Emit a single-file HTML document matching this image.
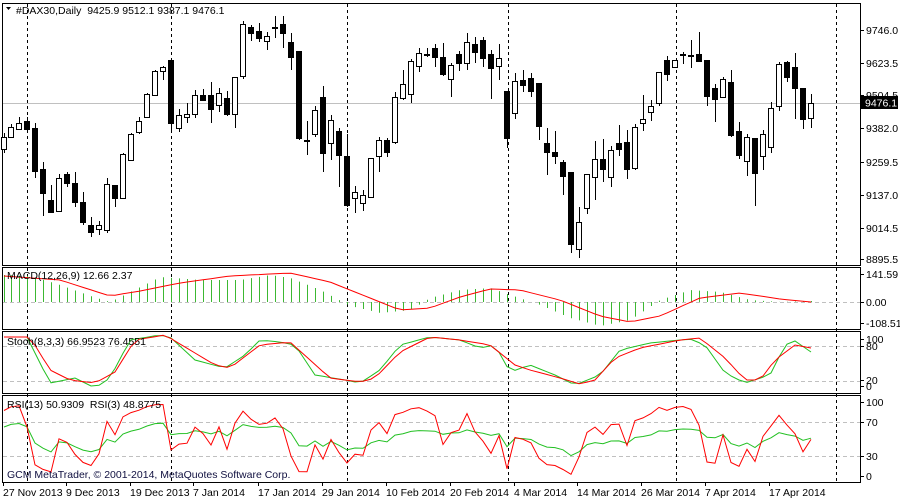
<!DOCTYPE html>
<html><head><meta charset="utf-8">
<style>
html,body{margin:0;padding:0;background:#fff;width:900px;height:500px;overflow:hidden}
svg{display:block}
text{font-family:"Liberation Sans",sans-serif;font-size:10.5px;fill:#000}
</style></head>
<body>
<svg id="s" width="900" height="500" xmlns="http://www.w3.org/2000/svg"></svg>
<script>
const S=document.getElementById('s');let h='';
// candles: x, high, low, open, close (pixel y)
const C=[
[4,133,153,149,137],[11,124,137,137,127],[19,117,129,129,123],[27,117,131,121,129],[35,123,178,128,171],
[43,162,216,169,193],[51,185,213,200,212],[59,174,211,211,178],[67,172,187,174,183],[75,172,207,183,202],
[83,192,225,202,222],[91,217,237,225,232],[99,221,235,229,225],[107,178,233,230,184],[115,185,207,185,198],
[123,153,198,198,154],[131,133,161,160,134],[139,117,134,132,121],[147,93,117,117,94],[155,70,95,95,71],
[163,66,80,71,67],[171,60,131,60,123],[179,109,132,128,115],[187,103,123,117,114],[195,90,118,114,95],
[203,89,100,95,100],[211,82,123,95,109],[219,88,112,105,93],[227,91,116,98,114],[235,77,128,114,77],
[243,21,79,76,24],[251,25,41,27,33],[259,23,42,31,38],[267,32,50,41,36],[275,16,38,27,28],
[283,16,48,24,33],[291,33,70,42,57],[299,51,140,51,138],[307,121,155,140,141],[315,106,137,134,110],
[323,86,172,97,153],[331,115,160,143,120],[339,128,187,131,155],[347,134,207,156,205],[355,186,213,198,192],
[363,190,211,203,195],[371,158,197,197,158],[379,137,172,156,140],[387,138,157,140,152],[395,92,144,142,97],
[403,70,100,98,84],[411,59,103,94,61],[419,48,72,66,53],[427,48,57,54,55],[435,44,67,48,57],
[443,43,76,57,74],[451,63,97,79,65],[459,51,71,54,63],[467,33,70,63,42],[475,37,63,44,52],
[483,37,67,40,58],[491,50,99,54,68],[499,44,80,66,58],[507,91,148,91,138],[515,73,119,113,81],
[523,70,92,80,85],[531,73,97,78,91],[539,83,140,83,126],[547,128,175,143,152],[555,131,164,152,156],
[563,160,195,162,176],[571,172,253,172,244],[579,207,258,249,222],[587,174,214,208,174],[595,141,200,177,159],
[603,139,182,159,169],[611,146,187,177,150],[619,125,156,143,149],[627,130,179,142,169],[635,124,170,168,127],
[643,95,131,123,119],[651,100,121,112,106],[659,72,106,103,72],[667,56,81,60,74],[675,60,67,67,60],
[683,52,64,54,55],[691,40,68,55,56],[699,32,62,54,61],[707,60,106,60,96],[715,84,122,88,99],
[723,77,98,97,79],[731,70,137,82,135],[739,122,159,131,155],[747,134,176,161,137],[755,138,206,138,173],
[763,130,170,156,134],[771,102,153,147,108],[779,62,111,106,64],[787,61,82,62,77],[795,53,119,67,88],
[803,88,129,88,119],[811,94,128,118,103]];
// panel frames
const P=[[3,265],[267,329],[331,393],[395,482]];
P.forEach(p=>h+=`<rect x="2.5" y="${p[0]+.5}" width="858" height="${p[1]-p[0]}" fill="none" stroke="#000"/>`);
// grid/current price
h+=`<line x1="3" x2="860" y1="103.5" y2="103.5" stroke="#c0c0c0"/>`;
function dash(y){h+=`<line x1="3" x2="860" y1="${y+.5}" y2="${y+.5}" stroke="#c0c0c0" stroke-dasharray="4,3"/>`;}
dash(302);dash(346);dash(381);dash(422);dash(456);
[27,171,347,508,676,836].forEach(x=>h+=`<line x1="${x+.5}" x2="${x+.5}" y1="4" y2="482" stroke="#000" stroke-dasharray="3,3"/>`);
// MACD
function interp(pts,x){for(let i=0;i<pts.length-1;i++){if(x>=pts[i][0]&&x<=pts[i+1][0]){const t=(x-pts[i][0])/(pts[i+1][0]-pts[i][0]);return pts[i][1]+t*(pts[i+1][1]-pts[i][1]);}}return pts[pts.length-1][1];}
const mb=[[4,275],[30,276],[60,285],[90,296],[110,302],[130,292],[160,277],[200,280],[240,280],[270,275],[290,278],[320,290],[350,306],[380,313],[410,310],[430,298],[460,290],[490,288],[510,295],[540,305],[570,318],[600,326],[630,320],[660,300],[690,290],[720,292],[750,300],[780,302],[811,301]];
C.forEach(c=>{const y=interp(mb,c[0]);h+=`<line x1="${c[0]+.5}" x2="${c[0]+.5}" y1="302" y2="${y}" stroke="#3cb832"/>`;});
function poly(pts,col){h+=`<polyline fill="none" stroke="${col}" points="${pts.map(p=>p.join(',')).join(' ')}"/>`;}
const ms=[[4,276],[60,280],[110,296],[140,291],[180,283],[230,276],[290,273],[330,282],[370,298],[400,310],[430,308],[460,297],[490,289],[520,290],[560,300],[600,316],[630,322],[660,316],[700,298],[740,293],[780,299],[811,302]];
poly(C.map(c=>[c[0],interp(ms,c[0]).toFixed(1)]),'#f00');
// Stoch
const sg=[[3,337],[27,337],[50,383],[75,378],[95,388],[110,378],[130,340],[160,335],[170,337],[195,360],[225,368],[245,355],[260,340],[280,342],[295,345],[315,375],[345,380],[360,383],[380,370],[400,345],[430,337],[460,340],[480,348],[495,345],[510,372],[530,365],[555,375],[575,385],[600,375],[620,350],[650,343],[690,339],[705,345],[725,373],[745,383],[770,375],[785,345],[795,341],[811,352]];
const sr=[[3,337],[30,337],[50,370],[70,380],[95,383],[115,372],[135,340],[165,335],[190,350],[215,365],[230,368],[260,345],[290,342],[310,360],[330,378],[360,382],[375,378],[400,352],[430,337],[460,340],[490,345],[515,365],[530,370],[560,378],[580,384],[595,380],[615,358],[640,348],[680,340],[700,338],[725,358],[745,380],[760,380],[775,360],[795,345],[811,348]];
poly(C.map(c=>[c[0],interp(sg,c[0]).toFixed(1)]),'#22c022');
poly(C.map(c=>[c[0],interp(sr,c[0]).toFixed(1)]),'#f00');
// RSI computed
function rsi(n,g0,l0){let ag=g0,al=l0,out=[];for(let i=0;i<C.length;i++){if(i>0){const d=C[i-1][4]-C[i][4];const g=Math.max(d,0),l=Math.max(-d,0);ag=(ag*(n-1)+g)/n;al=(al*(n-1)+l)/n;}out.push(100-100/(1+ag/Math.max(al,1e-6)));}return out;}
const r13=rsi(13,5,2.6),r3=rsi(3,7,1);
const ry=v=>(477-v*0.76).toFixed(1);
poly(C.map((c,i)=>[c[0],ry(r13[i])]),'#22c022');
poly(C.map((c,i)=>[c[0],ry(r3[i])]),'#f00');
// candles
C.forEach(c=>{const[x,hi,lo,o,cl]=c;const X=x+.5;h+=`<line x1="${X}" x2="${X}" y1="${hi}" y2="${lo}" stroke="#000"/>`;
 const t=Math.min(o,cl),b=Math.max(o,cl);
 if(b-t<1){h+=`<line x1="${x-2}" x2="${x+3}" y1="${t+.5}" y2="${t+.5}" stroke="#000"/>`;}
 else if(cl<o){h+=`<rect x="${x-2.5}" y="${t+.5}" width="5" height="${b-t}" fill="#fff" stroke="#000"/>`;}
 else{h+=`<rect x="${x-2.5}" y="${t+.5}" width="5" height="${b-t}" fill="#000" stroke="#000"/>`;}});
// right axis
const RA=[[30,'9746.0'],[63,'9623.5'],[95,'9504.5'],[128,'9382.0'],[162,'9259.5'],[195,'9137.0'],[228,'9014.5'],[259,'8895.5'],
[274,'141.59'],[302,'0.00'],[323,'-108.51'],[339,'100'],[346,'80'],[380,'20'],[386,'0'],[402,'100'],[422,'70'],[456,'30'],[476,'0']];
RA.forEach(a=>{h+=`<line x1="861" x2="864" y1="${a[0]+.5}" y2="${a[0]+.5}" stroke="#000"/><text x="866" y="${a[0]+4}">${a[1]}</text>`;});
h+=`<rect x="861" y="96" width="37" height="13" fill="#000"/><text x="865" y="106.5" style="fill:#fff">9476.1</text>`;
// top label
h+=`<path d="M6 7 L11 7 L8.5 10 Z" fill="#000"/><text x="16" y="14">#DAX30,Daily&#160;&#160;9425.9 9512.1 9387.1 9476.1</text>`;
h+=`<text x="7" y="279">MACD(12,26,9) 12.66 2.37</text>`;
h+=`<text x="7" y="345">Stoch(8,3,3) 66.9523 76.4551</text>`;
h+=`<text x="7" y="408">RSI(13) 50.9309&#160;&#160;RSI(3) 48.8775</text>`;
h+=`<text x="7" y="478" style="fill:#101040">GCM MetaTrader, © 2001-2014, MetaQuotes Software Corp.</text>`;
// dates
const D=[[3,'27 Nov 2013'],[66,'9 Dec 2013'],[130,'19 Dec 2013'],[193,'7 Jan 2014'],[258,'17 Jan 2014'],[322,'29 Jan 2014'],[386,'10 Feb 2014'],[450,'20 Feb 2014'],[514,'4 Mar 2014'],[577,'14 Mar 2014'],[641,'26 Mar 2014'],[705,'7 Apr 2014'],[769,'17 Apr 2014']];
D.forEach(d=>{h+=`<line x1="${d[0]+.5}" x2="${d[0]+.5}" y1="483" y2="486" stroke="#000"/><text x="${d[0]}" y="496">${d[1]}</text>`;});
S.innerHTML=h;
</script>
</body></html>
